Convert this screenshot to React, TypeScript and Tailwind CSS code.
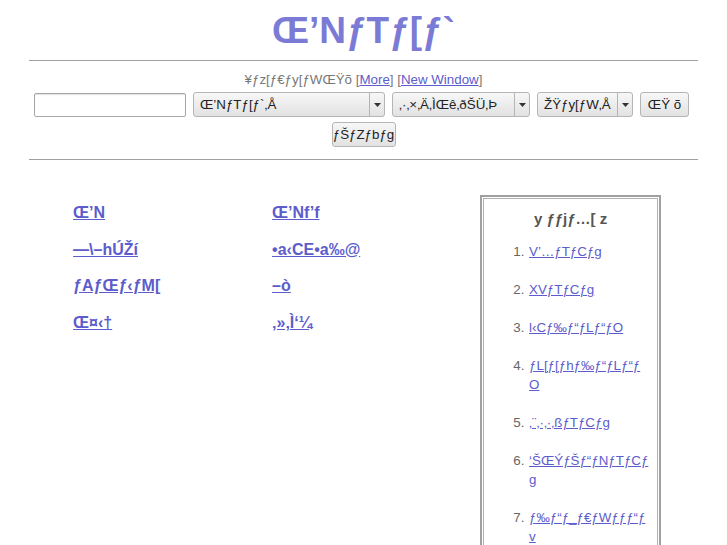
import React from "react";

const links: [string, string][] = [
	["Œ’N", "Œ’Nf’f"],
	["—\\–hÚŽí", "•a‹CE•a‰@"],
	["ƒAƒŒƒ‹ƒM[", "–ò"],
	["Œ¤‹†", "‚»‚Ì‘¼"],
];

const menu = [
	"V’…ƒTƒCƒg",
	"XVƒTƒCƒg",
	"l‹Cƒ‰ƒ“ƒLƒ“ƒO",
	"ƒL[ƒ[ƒhƒ‰ƒ“ƒLƒ“ƒO",
	"‚¨‚·‚·‚ßƒTƒCƒg",
	"‘ŠŒÝƒŠƒ“ƒNƒTƒCƒg",
	"ƒ‰ƒ“ƒ_ƒ€ƒWƒƒƒ“ƒv",
];

const FakeSelect = ({ label, width }: { label: string; width: string }) => (
	<div className={`flex h-[25px] ${width} items-stretch rounded-[3px] border border-[#b5b5b5] bg-gradient-to-b from-[#f7f7f7] to-[#e2e2e2] text-[13.33px] text-[#222]`}>
		<div className="flex flex-1 items-center overflow-hidden whitespace-nowrap pl-[6px]">{label}</div>
		<div className="flex w-[15px] items-center justify-center border-l border-[#b5b5b5]">
			<svg width="7" height="4" viewBox="0 0 7 4">
				<path d="M0 0h7L3.5 4z" fill="#333" />
			</svg>
		</div>
	</div>
);

const Btn = ({ label, width }: { label: string; width: string }) => (
	<div className={`flex h-[25px] ${width} items-center justify-center rounded-[3px] border border-[#b5b5b5] bg-gradient-to-b from-[#f7f7f7] to-[#e2e2e2] text-[13.33px] text-[#222]`}>
		{label}
	</div>
);

export default function App() {
	return (
		<div className="min-h-[545px] bg-white font-['Liberation_Sans',Arial,sans-serif] text-[#222]">
			<h1 className="pt-[9px] text-center text-[37px] font-bold leading-[44px] text-[#7b7bd6]">Œ’NƒTƒ[ƒ`</h1>
			<div className="mx-auto mt-[7px] w-[92%] border-t border-[#a0a0a0]" />

			<div className="mt-[11px] text-center text-[13.33px] leading-[16px] text-[#777]">
				¥ƒz[ƒ€ƒy[ƒWŒŸõ{" "}
				<span>
					[<a className="text-[#5c5ccc] underline">More</a>]
				</span>{" "}
				<span>
					[<a className="text-[#5c5ccc] underline">New Window</a>]
				</span>
			</div>

			<div className="mt-[4px] flex justify-center gap-[7px] pr-[4px]">
				<div className="mt-[1px] h-[24px] w-[152px] rounded-[2px] border border-[#a8a8a8] bg-white shadow-[inset_0_1px_1px_rgba(0,0,0,0.12)]" />
				<FakeSelect label="Œ’NƒTƒ[ƒ`‚Å" width="w-[192px]" />
				<FakeSelect label="‚·‚×‚Ä‚ÌŒê‚ðŠÜ‚Þ" width="w-[138px]" />
				<FakeSelect label="ŽŸƒy[ƒW‚Å" width="w-[96px]" />
				<Btn label="ŒŸ õ" width="w-[49px]" />
			</div>
			<div className="mt-[5px] flex justify-center">
				<Btn label="ƒŠƒZƒbƒg" width="w-[64px]" />
			</div>

			<div className="mx-auto mt-[12px] w-[92%] border-t border-[#a0a0a0]" />

			<div className="mx-auto flex w-[92%] pt-[35px]">
				<div className="w-[451px] pl-[44px] pt-[9px]">
					{links.map(([a, b]) => (
						<div key={a} className="grid h-[36.5px] grid-cols-[199px_1fr] text-[16px] font-bold leading-[18px]">
							<a className="justify-self-start text-[#5c5ccc] underline">{a}</a>
							<a className="justify-self-start text-[#5c5ccc] underline">{b}</a>
						</div>
					))}
				</div>
				<div className="w-[181px] border-2 border-[#a0a0a0] p-[1px]">
					<div className="min-h-[400px] border border-[#b0b0b0] pb-[20px]">
						<div className="pt-[11px] text-center text-[15px] font-bold leading-[17px] text-[#555]">y ƒƒjƒ…[ z</div>
						<ol className="mt-[15px] list-decimal pl-[44px] pr-[7px] text-[13.33px] leading-[19px] text-[#666]">
							{menu.map((m) => (
								<li key={m} className="mb-[19px] break-all pl-[1px]">
									<a className="text-[#5c5ccc] underline">{m}</a>
								</li>
							))}
						</ol>
					</div>
				</div>
			</div>
		</div>
	);
}
